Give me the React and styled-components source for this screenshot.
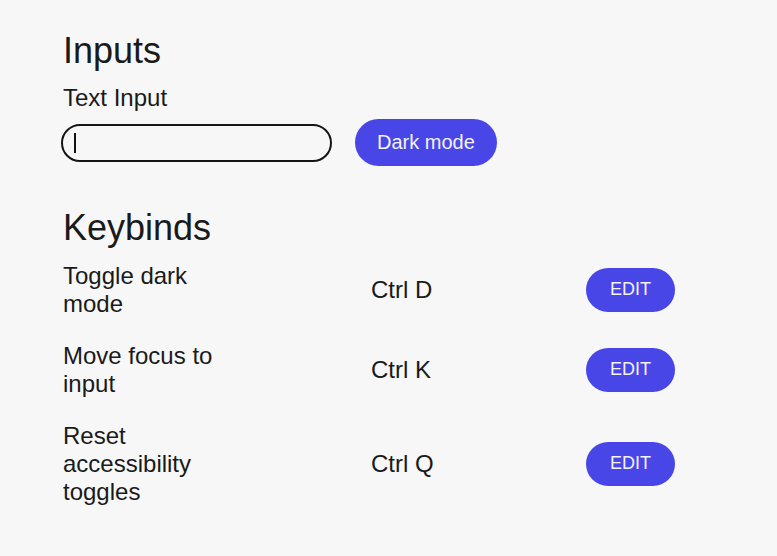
import React from "react"
import styled, { createGlobalStyle } from "styled-components"

const GlobalStyle = createGlobalStyle`
    body {
        margin: 0;
        background: #f7f7f7;
        color: #1a1a1a;
        font-family: "Liberation Sans", Arial, sans-serif;
    }
`

const Page = styled.main`
    padding: 30px 0 0 63px;
    font-size: 24px;
`

const Heading = styled.h2`
    margin: ${props => props.$top || 0}px 0 0;
    font-size: 36px;
    font-weight: 400;
    line-height: normal;
`

const Label = styled.label`
    display: block;
    margin-top: 12px;
    font-size: 24px;
`

const InputRow = styled.div`
    display: flex;
    align-items: center;
    gap: 23px;
    margin-top: 7px;
`

const InputWrap = styled.div`
    position: relative;
    margin-left: -2px;

    &::after {
        content: "";
        position: absolute;
        left: 13px;
        top: 9px;
        width: 2px;
        height: 20px;
        background: #111;
    }
`

const TextInput = styled.input`
    box-sizing: border-box;
    width: 271px;
    height: 38px;
    border: 2px solid #151515;
    border-radius: 19px;
    background: transparent;
    padding: 0 12px;
    font: inherit;
    font-size: 18px;
    outline: none;
`

const PillButton = styled.button`
    border: none;
    background: #4946e8;
    color: #f2f2f7;
    font-family: inherit;
    font-size: ${props => props.$small ? 18 : 20}px;
    line-height: normal;
    padding: ${props => props.$small ? "11px 24px 12px" : "12px 22px"};
    border-radius: 24px;
    cursor: pointer;
`

const Binds = styled.div`
    display: flex;
    flex-direction: column;
    gap: 24px;
    margin-top: 13px;
`

const BindRow = styled.div`
    display: grid;
    grid-template-columns: 308px 215px auto;
    align-items: center;
`

const Action = styled.div`
    max-width: 165px;
    line-height: normal;
`

const Combo = styled.div`
    line-height: normal;
`

const binds = [
    { action: "Toggle dark mode", combo: "Ctrl D" },
    { action: "Move focus to input", combo: "Ctrl K" },
    { action: "Reset accessibility toggles", combo: "Ctrl Q" },
]

function App() {
    return (
        <>
            <GlobalStyle/>
            <Page>
                <Heading>Inputs</Heading>
                <Label htmlFor="text-input">Text Input</Label>
                <InputRow>
                    <InputWrap>
                        <TextInput id="text-input" type="text"/>
                    </InputWrap>
                    <PillButton>Dark mode</PillButton>
                </InputRow>
                <Heading $top={41}>Keybinds</Heading>
                <Binds>
                    {binds.map(b => (
                        <BindRow key={b.combo}>
                            <Action>{b.action}</Action>
                            <Combo>{b.combo}</Combo>
                            <div>
                                <PillButton $small>EDIT</PillButton>
                            </div>
                        </BindRow>
                    ))}
                </Binds>
            </Page>
        </>
    )
}

export default App
